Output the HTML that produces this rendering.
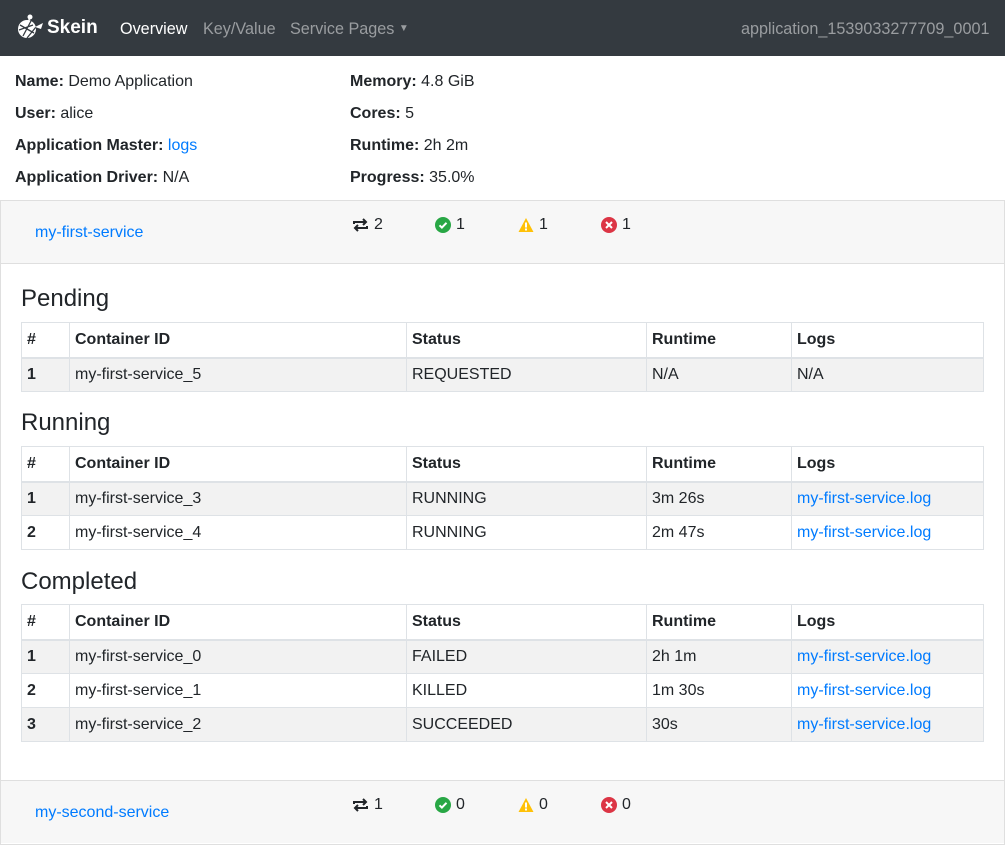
<!DOCTYPE html>
<html><head><meta charset="utf-8"><style>
*{box-sizing:border-box}
body{margin:0;width:1005px;height:845px;overflow:hidden;font-family:"Liberation Sans",sans-serif;font-size:16px;color:#212529;background:#fff;position:relative}
.nav{position:absolute;left:0;top:0;width:1005px;height:56px;background:#343a40}
.nav span{position:absolute;top:18px;font-size:16.2px;line-height:22px}
a{color:#007bff;text-decoration:none}
.info{position:absolute;line-height:24px}
.info b{font-weight:bold}
.card{position:absolute;left:0;width:1005px;border:1px solid #dfdfdf}
.ch{background:#f7f7f7;height:63px;position:relative;border-bottom:1px solid #dfdfdf}
.ch .nm{position:absolute;left:34px;top:23px}
.st{position:absolute;top:15px;display:flex;align-items:center;gap:5px}
h4{position:absolute;left:20px;margin:0;font-size:24px;font-weight:500;line-height:28px}
table{position:absolute;left:20px;width:963px;border-collapse:collapse}
td,th{border:1px solid #dee2e6;padding:0 5px;height:34px;text-align:left;vertical-align:middle}
th{font-weight:bold;border-bottom:2px solid #dee2e6;height:35px}
tbody tr:nth-child(odd){background:#f2f2f2}
</style></head><body>
<div class="nav">
<svg style="position:absolute;left:15px;top:13px" width="30" height="30" viewBox="0 0 30 30"><circle cx="12" cy="16" r="9" fill="#fff"/><path d="M5 12 L19 20 M4 17 L18 12 M8 23 L16 8 M12 25 L21 14" stroke="#343a40" stroke-width="1.3"/><circle cx="15" cy="4" r="2.5" fill="#fff"/><line x1="15" y1="4" x2="13" y2="10" stroke="#fff" stroke-width="1.5"/><path d="M20 14 L28 10 L26 16 Z" fill="#fff"/></svg>
<span style="left:47px;color:#fff;font-weight:bold;font-size:19px;top:17px">Skein</span>
<span style="left:120px;color:#fff">Overview</span>
<span style="left:203px;color:#9a9da0">Key/Value</span>
<span style="left:290px;color:#9a9da0">Service Pages <span style="position:static;font-size:10px;vertical-align:3px">&#9660;</span></span>
<span style="left:741px;color:#9a9da0">application_1539033277709_0001</span>
</div>
<div class="info" style="left:15px;top:70px"><b>Name:</b> Demo Application<br><div style="height:8px"></div><b>User:</b> alice<div style="height:8px"></div><b>Application Master:</b> <a>logs</a><div style="height:8px"></div><b>Application Driver:</b> N/A</div>
<div class="info" style="left:350px;top:70px"><b>Memory:</b> 4.8 GiB<div style="height:8px"></div><b>Cores:</b> 5<div style="height:8px"></div><b>Runtime:</b> 2h 2m<div style="height:8px"></div><b>Progress:</b> 35.0%</div>

<div class="card" style="top:200px;height:645px">
<div class="ch"><a class="nm">my-first-service</a>
<div class="st" style="left:351px"><svg width="17" height="14" viewBox="0 0 17 14"><path d="M2 6V4h12M11 1l3 3-3 3M15 8v2H3M6 13l-3-3 3-3" fill="none" stroke="#212529" stroke-width="2"/></svg>2</div>
<div class="st" style="left:434px"><svg width="16" height="16"><circle cx="8" cy="8" r="8" fill="#28a745"/><path d="M4.5 8.3l2.4 2.3 4.6-4.8" fill="none" stroke="#fff" stroke-width="2"/></svg>1</div>
<div class="st" style="left:517px"><svg width="16" height="16"><path d="M8 1L15.5 15H.5Z" fill="#ffc107"/><rect x="7" y="5.5" width="2" height="5" fill="#fff"/><rect x="7" y="11.5" width="2" height="2" fill="#fff"/></svg>1</div>
<div class="st" style="left:600px"><svg width="16" height="16"><circle cx="8" cy="8" r="8" fill="#dc3545"/><path d="M5 5l6 6M11 5l-6 6" stroke="#fff" stroke-width="2"/></svg>1</div>
</div>
<h4 style="top:84px">Pending</h4>
<table style="top:121px"><thead><tr><th style="width:48px">#</th><th style="width:337px">Container ID</th><th style="width:240px">Status</th><th style="width:145px">Runtime</th><th>Logs</th></tr></thead>
<tbody><tr><td><b>1</b></td><td>my-first-service_5</td><td>REQUESTED</td><td>N/A</td><td>N/A</td></tr></tbody></table>
<h4 style="top:208px">Running</h4>
<table style="top:245px"><thead><tr><th style="width:48px">#</th><th style="width:337px">Container ID</th><th style="width:240px">Status</th><th style="width:145px">Runtime</th><th>Logs</th></tr></thead>
<tbody><tr><td><b>1</b></td><td>my-first-service_3</td><td>RUNNING</td><td>3m 26s</td><td><a>my-first-service.log</a></td></tr>
<tr><td><b>2</b></td><td>my-first-service_4</td><td>RUNNING</td><td>2m 47s</td><td><a>my-first-service.log</a></td></tr></tbody></table>
<h4 style="top:367px">Completed</h4>
<table style="top:403px"><thead><tr><th style="width:48px">#</th><th style="width:337px">Container ID</th><th style="width:240px">Status</th><th style="width:145px">Runtime</th><th>Logs</th></tr></thead>
<tbody><tr><td><b>1</b></td><td>my-first-service_0</td><td>FAILED</td><td>2h 1m</td><td><a>my-first-service.log</a></td></tr>
<tr><td><b>2</b></td><td>my-first-service_1</td><td>KILLED</td><td>1m 30s</td><td><a>my-first-service.log</a></td></tr>
<tr><td><b>3</b></td><td>my-first-service_2</td><td>SUCCEEDED</td><td>30s</td><td><a>my-first-service.log</a></td></tr></tbody></table>
<div class="ch" style="position:absolute;top:579px;left:0;width:1003px;border-top:1px solid #dfdfdf;border-bottom:none"><a class="nm">my-second-service</a>
<div class="st" style="left:351px"><svg width="17" height="14" viewBox="0 0 17 14"><path d="M2 6V4h12M11 1l3 3-3 3M15 8v2H3M6 13l-3-3 3-3" fill="none" stroke="#212529" stroke-width="2"/></svg>1</div>
<div class="st" style="left:434px"><svg width="16" height="16"><circle cx="8" cy="8" r="8" fill="#28a745"/><path d="M4.5 8.3l2.4 2.3 4.6-4.8" fill="none" stroke="#fff" stroke-width="2"/></svg>0</div>
<div class="st" style="left:517px"><svg width="16" height="16"><path d="M8 1L15.5 15H.5Z" fill="#ffc107"/><rect x="7" y="5.5" width="2" height="5" fill="#fff"/><rect x="7" y="11.5" width="2" height="2" fill="#fff"/></svg>0</div>
<div class="st" style="left:600px"><svg width="16" height="16"><circle cx="8" cy="8" r="8" fill="#dc3545"/><path d="M5 5l6 6M11 5l-6 6" stroke="#fff" stroke-width="2"/></svg>0</div>
</div>
</div>
</body></html>
